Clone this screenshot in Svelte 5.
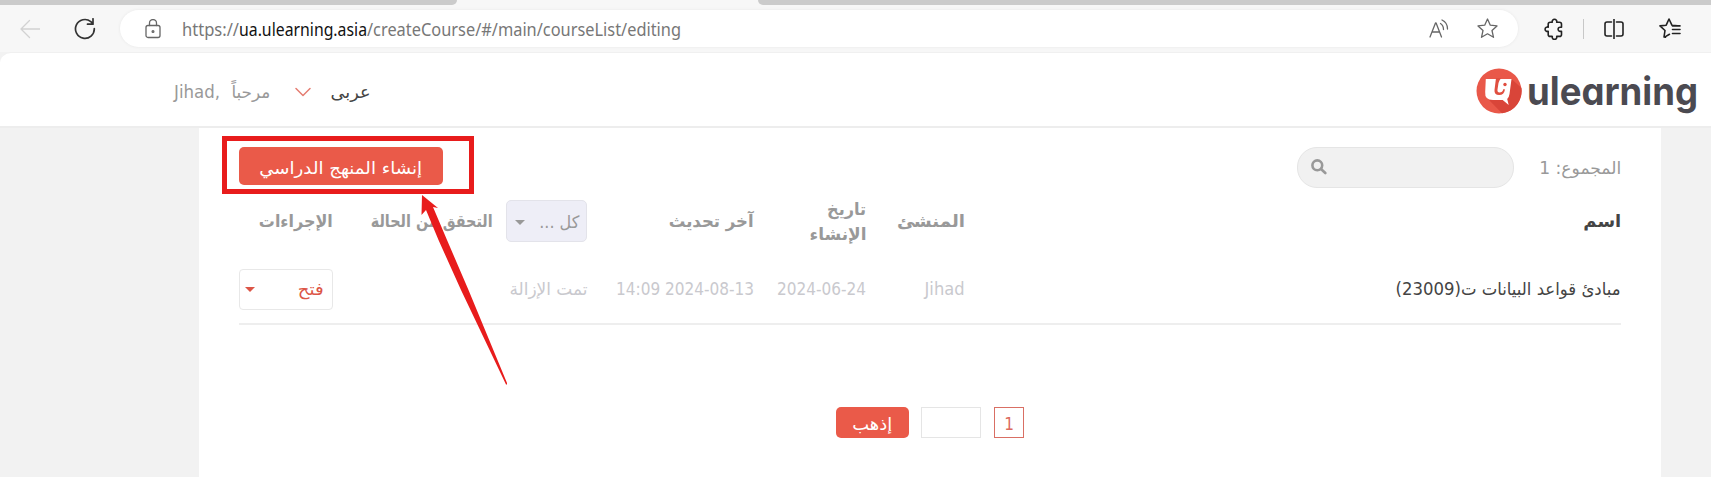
<script>
  const columns = [
    { key: 'creator', title: 'المنشئ', width: 68 },
    { key: 'created', title: 'تاريخ', width: 39, second: 'الإنشاء', secondWidth: 57 },
    { key: 'updated', title: 'آخر تحديث', width: 85 }
  ];
  const url = { scheme: 'https://', host: 'ua.ulearning.asia', path: '/createCourse/#/main/courseList/editing' };

  // Condenses a label horizontally so that it takes exactly the given width.
  function fit(node, width) {
    const natural = node.getBoundingClientRect().width;
    const rtl = getComputedStyle(node).direction === 'rtl';
    node.style.transformOrigin = rtl ? 'right center' : 'left center';
    node.style.transform = `scaleX(${width / natural})`;
    node.style[rtl ? 'marginLeft' : 'marginRight'] = `${width - natural}px`;
  }
</script>

{#snippet t(text, width)}<span class="fit" use:fit={width}>{text}</span>{/snippet}

<div class="window">
  <div class="tabs"><i class="tab first"></i><i class="tab last"></i></div>
  <div class="toolbar">
    <svg class="back" width="20" height="20" viewBox="0 0 20 20"><path d="M20 10H1M9.500 1.500 1 10l8.500 8.500" /></svg>
    <svg class="reload" width="22" height="22" viewBox="0 0 22 22"><path d="M20.300 10.500a9.400 9.400 0 1 1-3.500-6.900l1.700 1.600M19 .8v5.400h-5.500" /></svg>
    <div class="address">
      <svg class="lock" width="16" height="20" viewBox="0 0 16 20"><rect x="1" y="6.500" width="14" height="12" rx="2" /><path d="M4.500 6.500V4a3.500 3.500 0 0 1 7 0v2.500" /><circle cx="8" cy="12.500" r=".9" /></svg>
      <div class="url">{@render t(url.scheme, 57)}<b>{@render t(url.host, 128)}</b>{@render t(url.path, 314)}</div>
      <svg class="read" width="20" height="20" viewBox="0 0 20 20"><path d="M1 18 6.500 4h.6l5.400 14M3 13h7.500M11.500 4.500q3 1.800 3 6M13 1q5.500 2.500 5.500 9" /></svg>
      <svg class="star" width="21" height="21" viewBox="0 0 21 21"><path d="m10.500 1 2.800 6.200 6.700.7-5 4.600 1.500 6.800-6-3.500-6 3.500L6 12.500 1 7.900l6.700-.7z" /></svg>
    </div>
    <svg class="puzzle" width="20" height="22" viewBox="0 0 20 22"><path d="M6.200 4.200h2.100a2.300 2.300 0 1 1 4.400 0h2.800q2 0 2 2v3h-1.300a2.100 2.100 0 1 0 0 4.200h1.300v3q0 2-2 2h-2.800a2.300 2.300 0 1 1-4.400 0H6.200q-2 0-2-2v-3.200a2.200 2.200 0 1 1 0-4V6.200q0-2 2-2Z" /></svg>
    <i class="divider"></i>
    <svg class="split" width="20" height="20" viewBox="0 0 20 20"><path d="M7.500 3H3Q1 3 1 5v10q0 2 2 2h4.500M12.500 3H17q2 0 2 2v10q0 2-2 2h-4.500M10 0v20" /></svg>
    <svg class="favs" width="22" height="21" viewBox="0 0 22 21"><path d="M6.500 19.300 5 19l1-6.500L1 7.900l6.200-.7L10 1l2.900 6.200 6 .7M13.500 11.500H21M13.500 15.500H21M13.500 7.900H21M6 18.900l4.500-2.600" /></svg>
  </div>

  <main dir="rtl">
    <header>
      <div class="brand" dir="ltr">
        <svg class="logo" width="46" height="46" viewBox="0 0 46 46">
          <circle cx="23" cy="23" r="22.500" fill="#e95849" />
          <path d="M35.500 11 45.500 20A22.500 22.500 0 0 1 26 45.300L13 32l16-2z" fill="#d94539" />
          <path d="M9.800 11H35.500L33.500 26q-.5 3.500-2.300 5l1.500 6-6-5H17Q8.500 32 9.200 24Z" fill="#fff" />
          <path d="M20 10h5.500q-2.500 2-3 5l-1 6.500q-.4 3 2 3 3 0 4-3.500l1.500.5q-1 5.500-5.800 5.500-5.200 0-4.700-5Z" fill="#e04f40" />
          <circle cx="29" cy="16.500" r="1.700" fill="#e04c3e" />
        </svg>
        <span class="word">{@render t('ulearning', 171)}</span>
      </div>
      <div class="account">
        <span class="lang">{@render t('عربى', 40)}</span>
        <svg width="16" height="10" viewBox="0 0 16 10"><path d="m1 1.500 7 7 7-7" /></svg>
        <span class="hello">{@render t('مرحباً', 39)}</span>
        <span class="user" dir="ltr">{@render t('Jihad,', 46)}</span>
      </div>
    </header>

    <section class="sheet">
      <div class="tools">
        <span class="total">{@render t('المجموع: 1', 82)}</span>
        <div class="search"><svg width="16" height="16" viewBox="0 0 16 16"><circle cx="6.300" cy="6.300" r="4.900" /><path d="m10 10 4.300 4" /></svg></div>
        <button class="create">{@render t('إنشاء المنهج الدراسي', 163)}</button>
      </div>

      <div class="row head">
        <div class="name">{@render t('اسم', 38)}</div>
        {#each columns as c (c.key)}
          <div class:double={c.second}>
            {@render t(c.title, c.width)}
            {#if c.second}<br />{@render t(c.second, c.secondWidth)}{/if}
          </div>
        {/each}
        <div class="status"><div class="filter">{@render t('كل ...', 40)}<i class="caret"></i></div></div>
        <div class="check">{@render t('التحقق من الحالة', 122)}</div>
        <div class="actions">{@render t('الإجراءات', 74)}</div>
      </div>

      <div class="row item">
        <div class="name">{@render t('مبادئ قواعد البيانات ت(23009)', 225)}</div>
        <div>{@render t('Jihad', 40)}</div>
        <div dir="ltr" class="date">{@render t('2024-06-24', 89)}</div>
        <div dir="ltr" class="date">{@render t('14:09 2024-08-13', 138)}</div>
        <div>{@render t('تمت الإزالة', 78)}</div>
        <div></div>
        <div class="open">{@render t('فتح', 26)}<i class="caret"></i></div>
      </div>

      <nav>
        <span class="page">1</span>
        <span class="goto"></span>
        <button class="go">{@render t('إذهب', 40)}</button>
      </nav>
    </section>
  </main>

  <div class="highlight"></div>
  <svg class="arrow" width="92" height="192" viewBox="0 0 92 192"><path d="M1 0 17 13 12 12 26 45 47.500 95 86 188v1.500h-1L40 95 17.500 45 5 15 .5 20z" /></svg>
</div>

<style>
  :global(body) { background: #f2f2f2; }
  .window { position: relative; width: 1711px; height: 477px; overflow: hidden; background: #f7f7f7; font: 17px/24px 'DejaVu Sans Condensed', 'DejaVu Sans', sans-serif; color: #999; }
  svg { display: block; flex: none; fill: none; stroke: #666; stroke-width: 1.3; stroke-linejoin: round; stroke-linecap: round; }
  i { display: block; }
  .fit { display: inline-block; white-space: nowrap; }
  .tabs { height: 5px; display: flex; justify-content: space-between; }
  .tab { background: #cbcbcb; height: 5px; }
  .first { width: 457px; border-bottom-right-radius: 6px; }
  .last { width: 953px; border-bottom-left-radius: 6px; }
  .toolbar { height: 47px; box-sizing: border-box; display: flex; align-items: center; padding: 0 30px 0 20px; }
  .back { stroke: #d2d2d2; }
  .reload { margin-left: 34px; stroke: #333; stroke-width: 1.7; }
  .address { margin-left: 24px; flex: 1; height: 37px; border-radius: 19px; background: #fff; box-shadow: 0 0 3px #e6e6e6; display: flex; align-items: center; box-sizing: border-box; padding: 0 20px 0 25px; }
  .url { margin-left: 21px; font: 18px/24px 'Noto Sans', sans-serif; color: #777; white-space: nowrap; }
  .url b { font-weight: 400; color: #111; }
  .read { margin-left: auto; }
  .star { margin-left: 28px; }
  .puzzle { margin-left: 26px; }
  .puzzle, .split, .favs { stroke: #222; stroke-width: 1.6; }
  .divider { width: 1px; height: 20px; margin-left: 19px; background: #c8c8c8; }
  .split { margin-left: 20px; }
  .favs { margin-left: 35px; }
  main { height: 425px; background: #f2f2f2; }
  header { height: 76px; box-sizing: border-box; border-top: 1px solid #f0f0f0; border-bottom: 2px solid #ededed; border-top-left-radius: 11px; background: #fff; display: flex; align-items: center; justify-content: space-between; padding: 0 13px 0 174px; }
  .brand { display: flex; align-items: center; gap: 5px; }
  .logo { stroke: none; margin-top: 3px; }
  .word { margin-top: 3px; font: 700 39px/46px Inter, sans-serif; font-feature-settings: 'cv11'; color: #4b4a51; }
  .account { display: flex; align-items: center; padding-top: 5px; }
  .account svg { margin: 0 19px 0 25px; stroke: #e57d72; stroke-width: 1.5; }
  .account svg { margin: 0 20px 0 25px; }
  .lang { color: #444; }
  .hello { margin-left: 11px; }
  .sheet { width: 1462px; height: 349px; margin: 0 50px 0 0; box-sizing: border-box; padding: 19px 40px 0; background: #fff; }
  .tools { height: 41px; display: flex; align-items: flex-start; }
  .total { margin-top: 9px; }
  .search { margin-right: 25px; width: 217px; height: 41px; box-sizing: border-box; border: 1px solid #e5e5e5; border-radius: 20px; background: #f1f1f1; display: flex; justify-content: flex-end; align-items: center; padding-left: 13px; }
  .search svg { stroke: #999; stroke-width: 2.6; margin-bottom: 2px; }
  button { border: 0; padding: 0; margin: 0; border-radius: 5px; background: #ea5a49; color: #fff; font: inherit; }
  .create { width: 204px; height: 38px; margin-right: auto; padding-top: 3px; }
  .row { display: grid; grid-template-columns: 656px 99px 112px 167px 94px 160px 94px; align-items: center; }
  .head { height: 66px; font-weight: 700; }
  .head .name, .item .name { color: #444; }
  .double { line-height: 25px; padding-top: 1px; }
  .filter { width: 81px; height: 42px; box-sizing: border-box; border: 1px solid #e3e3ea; border-radius: 5px; background: #eeeef7; display: flex; align-items: center; justify-content: space-between; padding: 2px 7px 0 8px; font-weight: 400; }
  .caret { border: 5px solid transparent; border-top-color: currentColor; border-bottom: 0; }
  .item { height: 71px; padding-top: 1px; box-sizing: border-box; border-bottom: 2px solid #eee; color: #c9c9ce; }
  .date { text-align: right; }
  .open { height: 41px; box-sizing: border-box; border: 1px solid #e8e8e8; border-radius: 4px; display: flex; align-items: center; justify-content: space-between; padding: 0 8px 0 5px; color: #dc5546; }
  nav { display: flex; width: 188px; height: 31px; margin: 82px 597px 0 0; }
  .page, .goto { box-sizing: border-box; border: 1px solid #d96f64; width: 30px; text-align: center; color: #dc6a5d; line-height: 32px; }
  .goto { width: 60px; margin: 0 13px 0 12px; border-color: #e5e5e5; }
  .go { width: 73px; padding-top: 3px; }
  .highlight { position: absolute; left: 222px; top: 136px; width: 252px; height: 58px; box-sizing: border-box; border: 5px solid #e81c1c; }
  .arrow { position: absolute; left: 421px; top: 195px; fill: #e81c1c; stroke: none; }
</style>
